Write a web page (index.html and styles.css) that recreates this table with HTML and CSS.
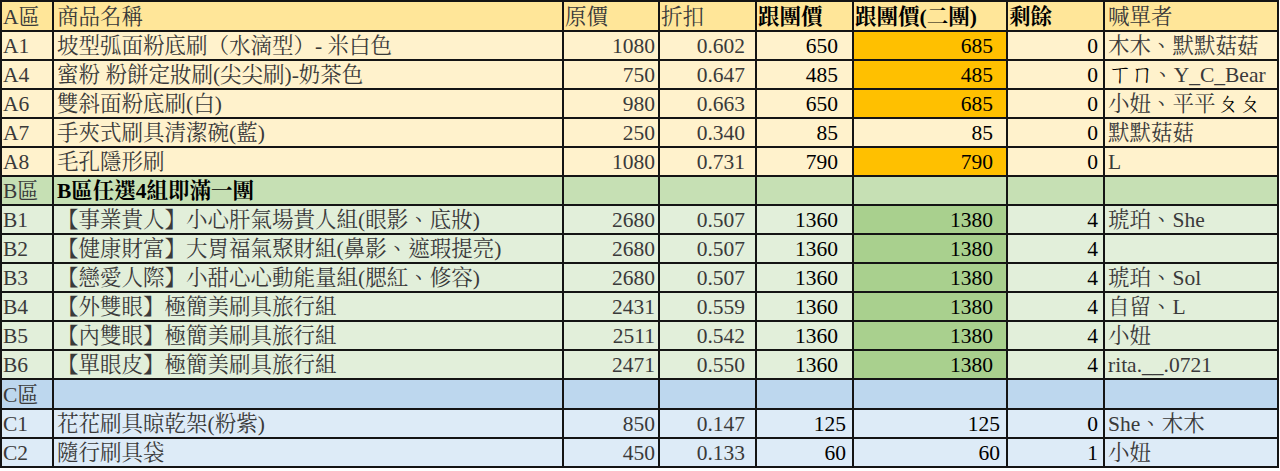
FILE: index.html
```html
<!DOCTYPE html>
<html lang="zh-Hant">
<head>
<meta charset="utf-8">
<title>團購表</title>
<link rel="stylesheet" href="styles.css">
</head>
<body>
<div class="sheet">
  <div class="row head">
    <div class="c">A區</div><div class="c name">商品名稱</div><div class="c">原價</div><div class="c">折扣</div><div class="c b">跟團價</div><div class="c b">跟團價(二團)</div><div class="c b">剩餘</div><div class="c who">喊單者</div>
  </div>
  <div class="row a">
    <div class="c">A1</div><div class="c name">坡型弧面粉底刷（水滴型）- 米白色</div><div class="c n p">1080</div><div class="c n d">0.602</div><div class="c n g">650</div><div class="c n g2 hot">685</div><div class="c n r">0</div><div class="c who">木木、默默菇菇</div>
  </div>
  <div class="row a">
    <div class="c">A4</div><div class="c name">蜜粉 粉餅定妝刷(尖尖刷)-奶茶色</div><div class="c n p">750</div><div class="c n d">0.647</div><div class="c n g">485</div><div class="c n g2 hot">485</div><div class="c n r">0</div><div class="c who"><span class="zy">ㄒㄇ</span>、Y_C_Bear</div>
  </div>
  <div class="row a">
    <div class="c">A6</div><div class="c name">雙斜面粉底刷(白)</div><div class="c n p">980</div><div class="c n d">0.663</div><div class="c n g">650</div><div class="c n g2 hot">685</div><div class="c n r">0</div><div class="c who">小妞、平平<span class="zy">ㄆㄆ</span></div>
  </div>
  <div class="row a">
    <div class="c">A7</div><div class="c name">手夾式刷具清潔碗(藍)</div><div class="c n p">250</div><div class="c n d">0.340</div><div class="c n g">85</div><div class="c n g2">85</div><div class="c n r">0</div><div class="c who">默默菇菇</div>
  </div>
  <div class="row a">
    <div class="c">A8</div><div class="c name">毛孔隱形刷</div><div class="c n p">1080</div><div class="c n d">0.731</div><div class="c n g">790</div><div class="c n g2 hot">790</div><div class="c n r">0</div><div class="c who">L</div>
  </div>
  <div class="row bh">
    <div class="c">B區</div><div class="c name b">B區任選4組即滿一團</div><div class="c"></div><div class="c"></div><div class="c"></div><div class="c"></div><div class="c"></div><div class="c"></div>
  </div>
  <div class="row bb">
    <div class="c">B1</div><div class="c name">【事業貴人】小心肝氣場貴人組(眼影、底妝)</div><div class="c n p">2680</div><div class="c n d">0.507</div><div class="c n g">1360</div><div class="c n g2 hot">1380</div><div class="c n r">4</div><div class="c who">琥珀、She</div>
  </div>
  <div class="row bb">
    <div class="c">B2</div><div class="c name">【健康財富】大胃福氣聚財組(鼻影、遮瑕提亮)</div><div class="c n p">2680</div><div class="c n d">0.507</div><div class="c n g">1360</div><div class="c n g2 hot">1380</div><div class="c n r">4</div><div class="c who"></div>
  </div>
  <div class="row bb">
    <div class="c">B3</div><div class="c name">【戀愛人際】小甜心心動能量組(腮紅、修容)</div><div class="c n p">2680</div><div class="c n d">0.507</div><div class="c n g">1360</div><div class="c n g2 hot">1380</div><div class="c n r">4</div><div class="c who">琥珀、Sol</div>
  </div>
  <div class="row bb">
    <div class="c">B4</div><div class="c name">【外雙眼】極簡美刷具旅行組</div><div class="c n p">2431</div><div class="c n d">0.559</div><div class="c n g">1360</div><div class="c n g2 hot">1380</div><div class="c n r">4</div><div class="c who">自留、L</div>
  </div>
  <div class="row bb">
    <div class="c">B5</div><div class="c name">【內雙眼】極簡美刷具旅行組</div><div class="c n p">2511</div><div class="c n d">0.542</div><div class="c n g">1360</div><div class="c n g2 hot">1380</div><div class="c n r">4</div><div class="c who">小妞</div>
  </div>
  <div class="row bb">
    <div class="c">B6</div><div class="c name">【單眼皮】極簡美刷具旅行組</div><div class="c n p">2471</div><div class="c n d">0.550</div><div class="c n g">1360</div><div class="c n g2 hot">1380</div><div class="c n r">4</div><div class="c who">rita.__.0721</div>
  </div>
  <div class="row ch">
    <div class="c">C區</div><div class="c name"></div><div class="c"></div><div class="c"></div><div class="c"></div><div class="c"></div><div class="c"></div><div class="c"></div>
  </div>
  <div class="row cc">
    <div class="c">C1</div><div class="c name">花花刷具晾乾架(粉紫)</div><div class="c n p">850</div><div class="c n d">0.147</div><div class="c n g">125</div><div class="c n g2">125</div><div class="c n r">0</div><div class="c who">She、木木</div>
  </div>
  <div class="row cc">
    <div class="c">C2</div><div class="c name">隨行刷具袋</div><div class="c n p">450</div><div class="c n d">0.133</div><div class="c n g">60</div><div class="c n g2">60</div><div class="c n r">1</div><div class="c who">小妞</div>
  </div>
</div>
</body>
</html>
```

FILE: styles.css
```css
html, body {
  margin: 0;
  padding: 0;
  background: #ffffff;
}

.sheet {
  display: grid;
  grid-template-columns: 50px 508px 94px 95px 95px 152px 95px 172px;
  grid-template-rows: 28px repeat(12, 27px) 28px 27px 27px;
  gap: 2px;
  padding: 2px;
  width: fit-content;
  background: #141414;
  font-family: "Liberation Serif", "Noto Serif CJK TC", "Noto Sans CJK TC", serif;
  font-size: 21.5px;
  color: #3a3a3a;
}

.row {
  display: contents;
}

.c {
  display: flex;
  align-items: flex-end;
  line-height: 1;
  padding: 0 2px 2px 1px;
  white-space: nowrap;
  overflow: hidden;
}

.zy {
  font-size: 1.12em;
  line-height: 0.9;
  letter-spacing: -2px;
  color: #000;
}

.name,
.who {
  padding-left: 3px;
}

.n {
  justify-content: flex-end;
}

.p { padding-right: 3px; }
.d { padding-right: 10px; }
.g { padding-right: 14px; color: #000; }
.g2 { padding-right: 13px; color: #000; }
.r { padding-right: 5px; color: #000; }

.cc .g,
.cc .g2 {
  padding-right: 6px;
}

.b {
  font-weight: bold;
  color: #000;
}

.head .c { background: #ffe699; }
.a .c { background: #fff2cc; }
.a .hot { background: #ffc000; }
.bh .c { background: #c6e0b4; }
.bb .c { background: #e2efda; }
.bb .hot { background: #a9d08e; }
.ch .c { background: #bdd7ee; }
.cc .c { background: #ddebf7; }
```
